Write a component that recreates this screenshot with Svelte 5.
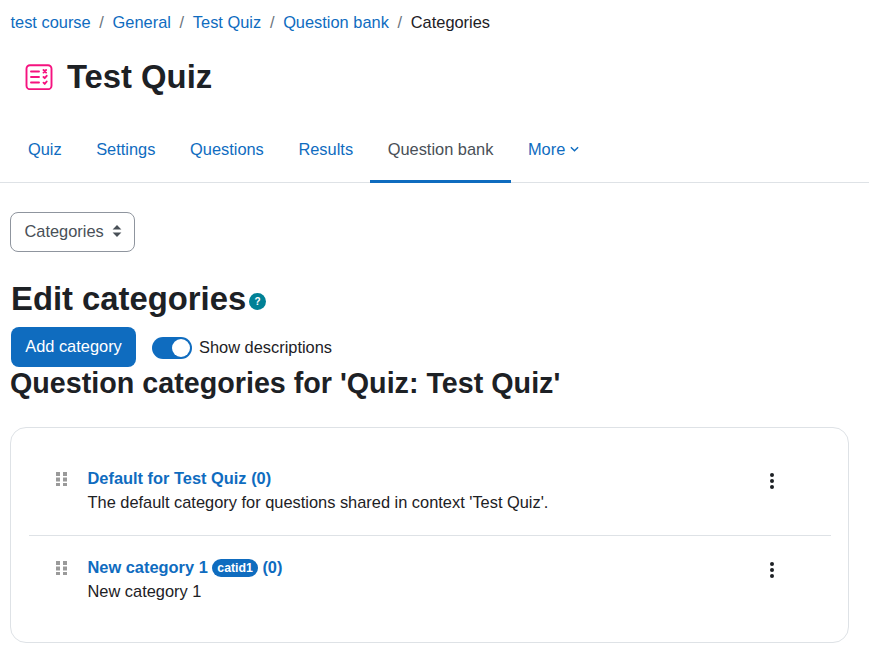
<script lang="ts">
	const crumbs = ['test course', 'General', 'Test Quiz', 'Question bank'];
	const tabs = ['Quiz', 'Settings', 'Questions', 'Results', 'Question bank'];
	const categories = [
		{ name: 'Default for Test Quiz', idnumber: '', count: 0, description: "The default category for questions shared in context 'Test Quiz'." },
		{ name: 'New category 1', idnumber: 'catid1', count: 0, description: 'New category 1' }
	];
</script>

<div class="page">
	<nav class="breadcrumb">
		{#each crumbs as crumb}
			<a href="#top">{crumb}</a>
			<span class="sep">/</span>
		{/each}
		<span class="current">Categories</span>
	</nav>

	<header class="page-header">
		<svg class="quiz-icon" viewBox="0 0 28 26" width="28" height="26" fill="none" stroke="#f5127f" stroke-width="1.9" stroke-linecap="round" stroke-linejoin="round">
			<rect x="1.5" y="1.2" width="25" height="24" rx="3.5" />
			<path d="M6 7.5h8M6 13h8M6 18.5h8" />
			<path d="M18.5 6l2.6 2.6M21.1 6l-2.6 2.6M18.5 13l1.2 1.2 2-2.4M18.5 18.7l1.2 1.2 2-2.4" />
		</svg>
		<h1>Test Quiz</h1>
	</header>

	<ul class="tabs">
		{#each tabs as tab}
			<li class:active={tab === 'Question bank'}><a href="#top">{tab}</a></li>
		{/each}
		<li>
			<a href="#top" class="more">
				More
				<svg viewBox="0 0 10 6" width="9" height="6" fill="none" stroke="currentColor" stroke-width="1.6"><path d="M1 1l4 4 4-4" /></svg>
			</a>
		</li>
	</ul>

	<main class="content">
		<button class="select">
			Categories
			<svg viewBox="0 0 10 14" width="10" height="14" fill="#495057"><path d="M5 1l4.4 4.6H.6zM5 13L.6 8.4h8.8z" /></svg>
		</button>

		<div class="edit-heading">
			<h2>Edit categories</h2>
			<span class="help">?</span>
		</div>

		<div class="actions">
			<button class="primary">Add category</button>
			<span class="toggle"><span class="knob"></span></span>
			<span class="toggle-label">Show descriptions</span>
		</div>

		<h3>Question categories for 'Quiz: Test Quiz'</h3>

		<section class="card">
			{#each categories as category}
				<div class="row">
					<svg class="grip" viewBox="0 0 11 14" width="11" height="14" fill="#9a9a9a">
						<rect x="0" y="0" width="4" height="4" />
						<rect x="7" y="0" width="4" height="4" />
						<rect x="0" y="5.5" width="4" height="4" />
						<rect x="7" y="5.5" width="4" height="4" />
						<rect x="0" y="11" width="4" height="4" />
						<rect x="7" y="11" width="4" height="4" />
					</svg>
					<div class="info">
						<a class="name" href="#top">
							{category.name}
							{#if category.idnumber}<span class="badge">{category.idnumber}</span>{/if}
							({category.count})
						</a>
						<p>{category.description}</p>
					</div>
					<span class="kebab"><i></i><i></i><i></i></span>
				</div>
			{/each}
		</section>
	</main>
</div>

<style>
	:global(body) {
		margin: 0;
		background: #fff;
		font-family: 'Liberation Sans', Arial, sans-serif;
		font-size: 16.4px;
		line-height: 1.5;
		color: #1d2125;
	}

	a {
		color: #0f6cbf;
		text-decoration: none;
	}

	h1,
	h2,
	h3,
	p {
		margin: 0;
	}

	.page {
		height: 662px;
		overflow: hidden;
	}

	.breadcrumb {
		display: flex;
		gap: 8.7px;
		padding: 10px 0 0 10.5px;
		height: 25px;
	}

	.sep {
		color: #6a737b;
	}

	.page-header {
		display: flex;
		align-items: center;
		gap: 14px;
		padding: 18px 0 0 25px;
		height: 48px;
	}

	.quiz-icon {
		flex: none;
	}

	h1 {
		font-size: 32.8px;
		line-height: 48px;
		font-weight: 700;
	}

	.tabs {
		display: flex;
		list-style: none;
		margin: 23px 0 0;
		padding: 0 0 0 10.6px;
		height: 58px;
		border-bottom: 1px solid #dee2e6;
	}

	.tabs li {
		display: flex;
		align-items: center;
		padding: 0 17.3px 5px;
		margin-bottom: -1px;
		border-bottom: 3px solid transparent;
	}

	.tabs li.active {
		border-bottom-color: #0f6cbf;
	}

	.tabs li.active a {
		color: #495057;
	}

	.more {
		display: flex;
		align-items: center;
		gap: 5px;
	}

	.content {
		padding: 29px 20px 0 10px;
	}

	.select {
		display: flex;
		align-items: center;
		gap: 8px;
		width: 125px;
		height: 40px;
		padding: 0 0 2px 13.5px;
		background: #fff;
		border: 1px solid #8f959e;
		border-radius: 8px;
		color: #495057;
		font: inherit;
	}

	.edit-heading {
		display: flex;
		align-items: center;
		gap: 3px;
		margin: 23px 0 0 1px;
		height: 48px;
	}

	h2 {
		font-size: 32.8px;
		line-height: 48px;
		font-weight: 700;
	}

	.help {
		display: flex;
		align-items: center;
		justify-content: center;
		width: 17px;
		height: 17px;
		margin-top: 4px;
		border-radius: 50%;
		background: #008196;
		color: #fff;
		font-size: 10px;
		font-weight: 700;
	}

	.actions {
		display: flex;
		align-items: center;
		margin: 4px 0 0 1px;
		height: 40px;
	}

	.primary {
		width: 125px;
		height: 40px;
		padding: 0 0 2px;
		background: #0f6cbf;
		border: none;
		border-radius: 8px;
		color: #fff;
		font: inherit;
	}

	.toggle {
		display: flex;
		align-items: center;
		justify-content: flex-end;
		box-sizing: border-box;
		width: 40px;
		height: 22px;
		margin: 2px 7px 0 16px;
		padding-right: 2px;
		background: #0f6cbf;
		border-radius: 11px;
	}

	.knob {
		width: 18px;
		height: 18px;
		border-radius: 50%;
		background: #fff;
	}

	h3 {
		font-size: 28.7px;
		line-height: 32px;
		font-weight: 700;
	}

	.card {
		margin-top: 28px;
		padding: 19px 17px 18px 18px;
		border: 1px solid #dee2e6;
		border-radius: 16px;
	}

	.row {
		display: flex;
		align-items: flex-start;
		height: 89px;
		padding: 18px 0 0 27px;
		box-sizing: border-box;
		border-bottom: 1px solid #dee2e6;
	}

	.row:last-child {
		border-bottom: none;
		height: 88px;
	}

	.grip {
		flex: none;
		margin-top: 7px;
	}

	.info {
		flex: 1;
		margin: 1px 0 0 20.5px;
		line-height: 24px;
	}

	.name {
		display: block;
		font-weight: 700;
	}

	.badge {
		display: inline-block;
		padding: 0 5px;
		background: #0f6cbf;
		border-radius: 9px;
		color: #fff;
		font-size: 12.3px;
		line-height: 18px;
		vertical-align: 1px;
	}

	.kebab {
		display: flex;
		flex-direction: column;
		gap: 2px;
		margin: 8px 57px 0 0;
	}

	.kebab i {
		width: 4px;
		height: 4px;
		border-radius: 50%;
		background: #1d2125;
	}
</style>
